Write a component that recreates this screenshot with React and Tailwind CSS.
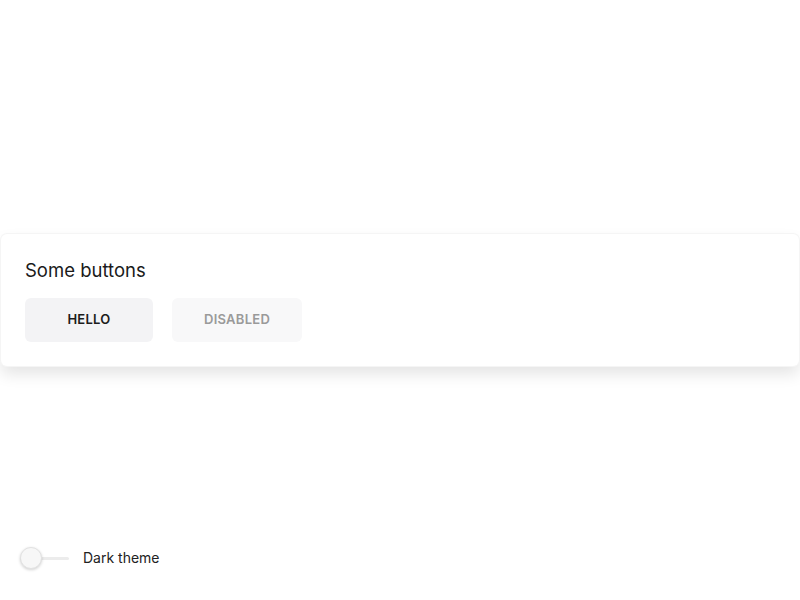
import { useState } from 'react';

const Toggle = ({ checked, onChange, label }) => (
    <label className="flex items-center cursor-pointer select-none">
        <button
            type="button"
            role="switch"
            aria-checked={checked}
            onClick={() => onChange(!checked)}
            className="relative w-[49px] h-[22px] flex items-center"
        >
            <span className="block w-full h-[3px] rounded-full bg-[#ececec]" />
            <span
                className={`absolute top-0 w-[22px] h-[22px] rounded-full bg-[#f7f7f7] border border-[#e2e2e2] shadow-[0_1px_3px_rgba(0,0,0,0.18)] transition-all ${checked ? 'left-[27px]' : 'left-0'}`}
            />
        </button>
        <span className="ml-[14px] text-[14px] text-[#222] leading-5">{label}</span>
    </label>
);

export default function App() {
    const [dark, setDark] = useState(false);

    return (
        <div className="relative h-[600px] bg-white flex items-center font-['Inter','Liberation_Sans',sans-serif] overflow-hidden">
            <div className="mx-px mb-px flex-1 bg-white rounded-[6px] shadow-[0_0_0_1px_#f5f5f5,0_8px_16px_rgba(0,0,0,0.11)] px-6 pt-[22px] pb-6">
                <h2 className="text-[18.5px] leading-7 text-[#1a1a1a] font-normal">Some buttons</h2>
                <div className="mt-[14px] flex gap-[19px]">
                    <button className="h-11 min-w-[128px] px-8 rounded-[6px] bg-[#f3f3f5] text-[13px] font-semibold tracking-[0.02em] text-[#1c1c1c]">
                        HELLO
                    </button>
                    <button disabled className="h-11 min-w-[128px] px-8 rounded-[6px] bg-[#f8f8f9] text-[13px] font-semibold tracking-[0.02em] text-[#9a9a9a] cursor-not-allowed">
                        DISABLED
                    </button>
                </div>
            </div>
            <div className="absolute left-5 bottom-[31px]">
                <Toggle checked={dark} onChange={setDark} label="Dark theme" />
            </div>
        </div>
    );
}
